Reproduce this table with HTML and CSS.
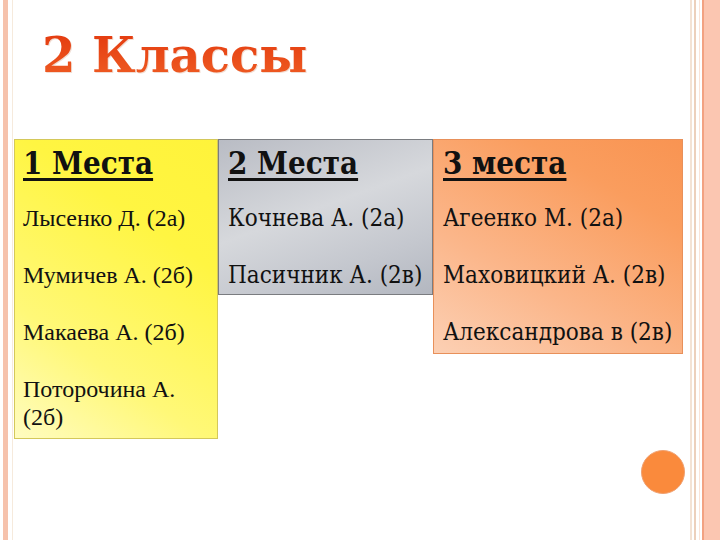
FILE: index.html
```html
<!DOCTYPE html>
<html lang="ru">
<head>
<meta charset="utf-8">
<title>2 Классы</title>
<link rel="stylesheet" href="styles.css">
</head>
<body>
<div class="slide">
  <div class="left-band"></div>
  <main class="content">
    <h1 class="title">2 Классы</h1>
    <div class="table">
      <section class="col col-yellow">
        <h2 class="head">1 Места</h2>
        <p class="item times">Лысенко Д. (2а)</p>
        <p class="item times">Мумичев А. (2б)</p>
        <p class="item times">Макаева А. (2б)</p>
        <p class="item times">Поторочина А.<br>(2б)</p>
      </section>
      <section class="col col-gray">
        <h2 class="head">2 Места</h2>
        <p class="item school">Кочнева А. (2а)</p>
        <p class="item school">Пасичник А. (2в)</p>
      </section>
      <section class="col col-orange">
        <h2 class="head">3 места</h2>
        <p class="item school">Агеенко М. (2а)</p>
        <p class="item school">Маховицкий А. (2в)</p>
        <p class="item school">Александрова в (2в)</p>
      </section>
    </div>
    <div class="dot"></div>
  </main>
  <div class="right-band">
    <span class="rl rl1"></span>
    <span class="rl rl2"></span>
    <span class="rl rl3"></span>
    <span class="rfill"></span>
  </div>
</div>
</body>
</html>
```
FILE: styles.css
```css
* { box-sizing: border-box; }
html, body { margin: 0; padding: 0; background: #fff; }
.slide {
  width: 720px;
  height: 540px;
  display: flex;
  overflow: hidden;
  background: #fff;
}
.left-band {
  width: 14px;
  flex: none;
  background: linear-gradient(to right, #fff 0 3px, #f6c2ac 3px 8px, #fff 8px 12px, #f6eadc 12px 13px, #fff 13px);
}
.content {
  width: 674px;
  flex: none;
  position: relative;
}
.title {
  margin: 25px 0 0 28px;
  height: 114px;
  font-family: "DejaVu Serif", serif;
  font-weight: bold;
  font-size: 48px;
  line-height: 60px;
  letter-spacing: 0;
  background: linear-gradient(to bottom, #e2360c 0%, #ee5a22 45%, #f8a46a 100%);
  -webkit-background-clip: text;
  background-clip: text;
  color: transparent;
  filter: drop-shadow(1px 1px 0 rgba(200,120,80,0.25));
}
.table {
  display: flex;
  align-items: flex-start;
}
.col {
  padding: 5px 0 7px 8px;
}
.col-yellow {
  width: 204px;
  background: linear-gradient(35deg, #fffcc0 0%, #fff878 30%, #fff542 70%, #fff33a 100%);
  border: 1px solid #d4c85a;
}
.col-gray {
  width: 215px;
  background: linear-gradient(160deg, #b9bcc4 0%, #d6d8dc 45%, #c4c7ce 75%, #b3b7c0 100%);
  border: 1px solid #7a7c80;
  padding-left: 9px;
  padding-bottom: 5px;
}
.col-orange {
  width: 250px;
  background: linear-gradient(30deg, #fcd0b4 0%, #fbb68a 35%, #fa9d5e 75%, #f99452 100%);
  border: 1px solid #e8905a;
  padding-left: 9px;
  padding-bottom: 7px;
}
.head {
  margin: 0 0 23px;
  height: 36px;
  font-family: "DejaVu Serif Condensed", "DejaVu Serif", serif;
  font-size: 31px;
  line-height: 36px;
  font-weight: bold;
  text-decoration: underline;
  text-decoration-thickness: 3px;
  text-underline-offset: 4px;
  color: #111;
  white-space: nowrap;
}
.item {
  margin: 0 0 29px;
  font-size: 24px;
  line-height: 28px;
  color: #111;
  white-space: nowrap;
}
.item:last-child { margin-bottom: 0; }
.times { font-family: "Liberation Serif", serif; }
.school { font-family: "DejaVu Serif Condensed", "DejaVu Serif", serif; }
.dot {
  position: absolute;
  left: 627px;
  top: 450px;
  width: 44px;
  height: 44px;
  border-radius: 50%;
  background: #fa8a3c;
  border: 1px solid #f0a070;
}
.right-band {
  flex: 1;
  position: relative;
  background: #fff;
}
.rl { position: absolute; top: 0; bottom: 0; }
.rl1 { left: 2px; width: 2px; background: #f3e2d4; }
.rl2 { left: 6px; width: 2px; background: #ecd0bc; }
.rl3 { left: 11px; width: 1px; background: #fbe4d8; }
.rfill { position: absolute; top: 0; bottom: 0; left: 14px; right: 0; background: #fbc6b1; border-left: 2px solid #f2a282; }
```
